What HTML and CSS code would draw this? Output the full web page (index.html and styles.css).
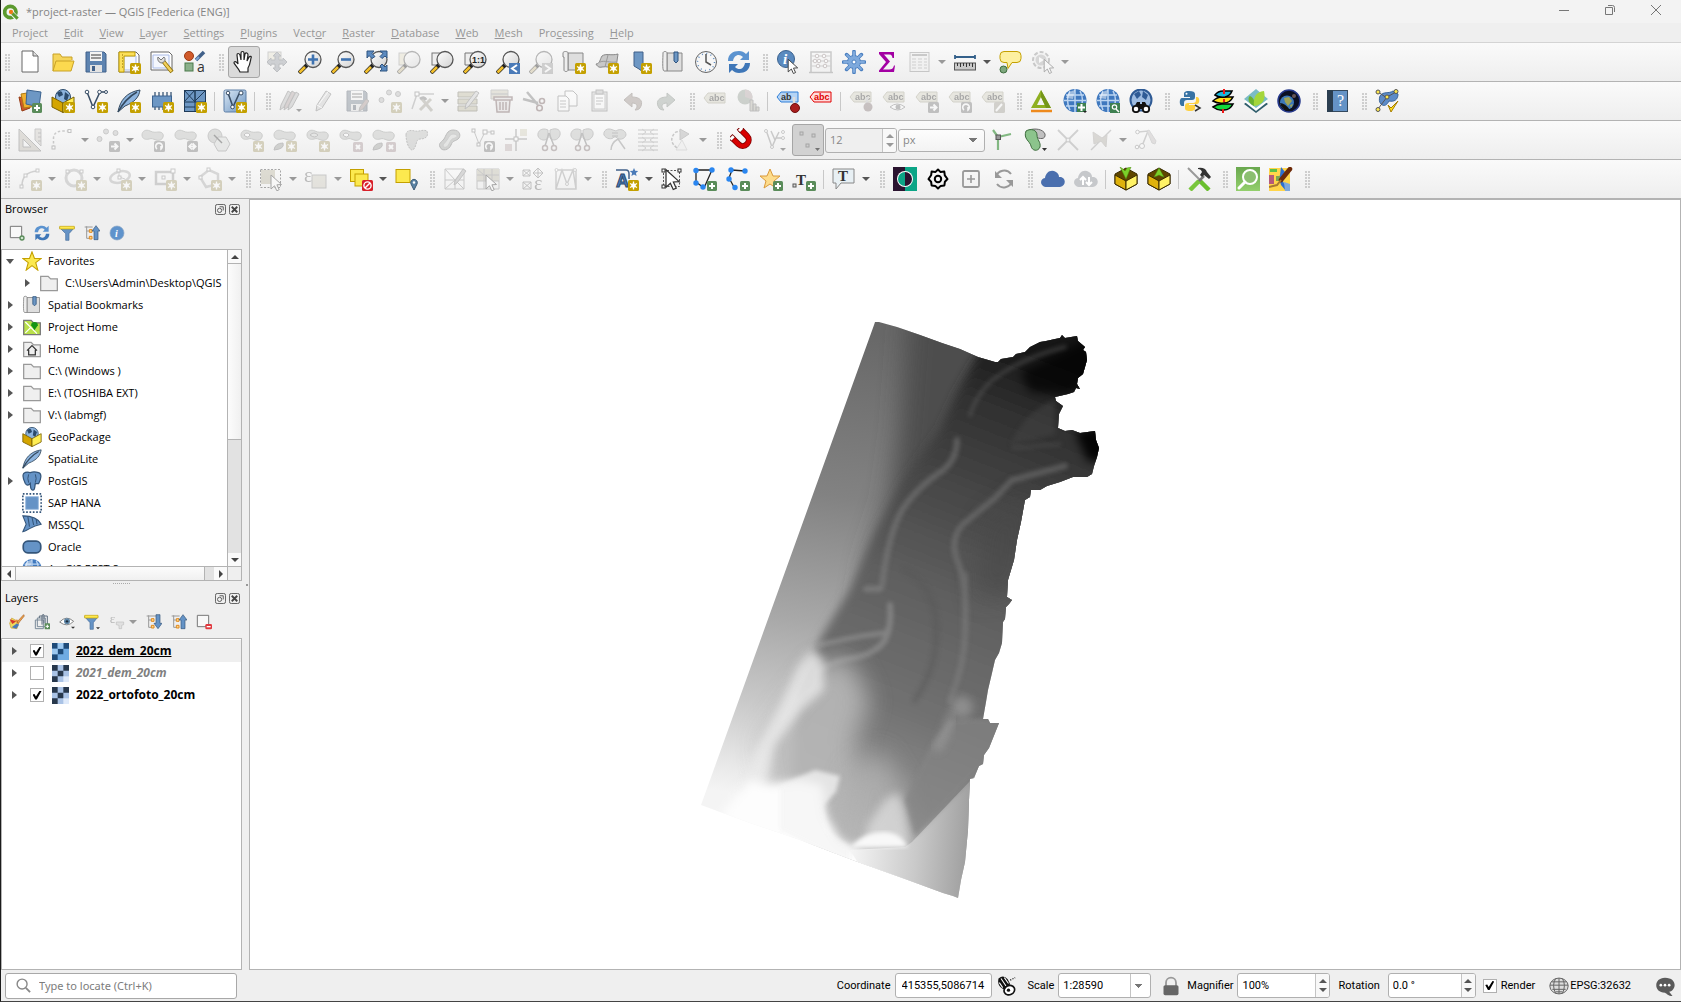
FILE: index.html
```html
<!DOCTYPE html>
<html lang="en">
<head>
<meta charset="utf-8">
<title>*project-raster — QGIS [Federica (ENG)]</title>
<link rel="stylesheet" href="styles.css">
</head>
<body>
<svg class="paints" aria-hidden="true">
<defs>
<linearGradient id="g-blue" x1="0" y1="0" x2="1" y2="1"><stop offset="0" stop-color="#dbe8f5"/><stop offset="1" stop-color="#6a93c0"/></linearGradient>
<linearGradient id="g-glass" x1="0" y1="0" x2="1" y2="1"><stop offset="0" stop-color="#fff"/><stop offset="1" stop-color="#d2d2d2"/></linearGradient>
<linearGradient id="g-green" x1="0" y1="0" x2="0" y2="1"><stop offset="0" stop-color="#6aa84f"/><stop offset="1" stop-color="#93cf6c"/></linearGradient>
</defs>
</svg>
<svg class="sprite" aria-hidden="true">
<defs>
<g id="b-new"><rect x="13" y="13" width="11" height="11" rx="1.5" fill="#c4a000"/><path d="M18.500 14.500v8M15 16.500l7 4M22 16.500l-7 4" stroke="#fff" stroke-width="1.300"/><circle cx="18.500" cy="18.500" r="2.200" fill="#fff"/></g>
<g id="b-add"><rect x="14" y="14" width="10" height="10" rx="1.500" fill="#5a8c5a"/><path d="M19 16v6M16 19h6" stroke="#fff" stroke-width="2"/></g>
<g id="b-del"><rect x="14" y="14" width="10" height="10" rx="1.500" fill="#c98a94"/><path d="M17 17l4 4M21 17l-4 4" stroke="#fff" stroke-width="2"/></g>
<g id="b-go"><rect x="13" y="13" width="11" height="11" rx="1.500" fill="#777"/><path d="M15 18.500h6M18.500 15.500l3 3-3 3" stroke="#fff" stroke-width="2" fill="none"/></g>
<g id="b-rot"><rect x="13" y="13" width="11" height="11" rx="1.500" fill="#777"/><path d="M16 21a3.300 3.300 0 1 1 4 0v-3" stroke="#fff" stroke-width="1.600" fill="none"/></g>
<g id="g-arrow"><path d="M8 7v14l3.500-3.200 2.300 5 2.400-1.100-2.300-4.900 4.600-.300z" fill="#fff" stroke="#333" stroke-width="1"/></g>
<g id="lens"><path d="M1 23l8-8" stroke="#222" stroke-width="4"/><path d="M1.500 22.500l5.500-5.500" stroke="#f2bf2c" stroke-width="2.600"/><circle cx="15" cy="9.500" r="8" fill="url(#g-glass)" stroke="#555" stroke-width="1.300"/></g>
<g id="tag"><path d="M1 8l4-5h17v10H5z" fill="#d8d29a" stroke="#a8a15e"/><text x="6" y="11" class="t-abc">abc</text></g>
<g id="blob"><path d="M1 7c0-4 4-6 8-4s6 1 9 1 5 2 4 5-4 4-7 3-4-2-7-1-7 0-7-4z" fill="#b9bdb6" stroke="#8a9086"/></g>
<g id="nodes" fill="#fff" stroke="#777"><rect x="1" y="18" width="3" height="3"/><rect x="17" y="1.500" width="3" height="3"/></g>
</defs>

<symbol id="logo" viewBox="0 0 24 24"><circle cx="11" cy="12" r="8.500" fill="none" stroke="#5c9a2e" stroke-width="5.500"/><path d="M12 12l10 11" stroke="#f3f3f3" stroke-width="7"/><path d="M14 14l8 8" stroke="#5c9a2e" stroke-width="4.500"/><circle cx="12" cy="12" r="3.200" fill="#ee7913"/></symbol>
<symbol id="new" viewBox="0 0 24 24"><path d="M4 1h11l5 5v16H4z" fill="#fff" stroke="#666"/><path d="M15 1v5h5" fill="#ddd" stroke="#666"/></symbol>
<symbol id="open" viewBox="0 0 24 24"><path d="M2 21V4h7l2 3h10v3" fill="#f5d55b" stroke="#c9a227"/><path d="M2 21l3-10h18l-3 10z" fill="#fcd94f" stroke="#c9a227"/></symbol>
<symbol id="save" viewBox="0 0 24 24"><path d="M2 2h18l2 2v18H2z" fill="#5d83b0" stroke="#41618a"/><rect x="6" y="2" width="12" height="9" fill="#f4f4f4"/><path d="M7 5h10M7 8h10" stroke="#777" stroke-width="1.500"/><rect x="6" y="15" width="12" height="7" fill="#e2e2e2"/><rect x="8" y="16" width="3" height="5" fill="#41618a"/></symbol>
<symbol id="layout" viewBox="0 0 24 24"><path d="M2 2h17l3 3v17H2z" fill="#fff" stroke="#666"/><path d="M7 6h12v14H7z" fill="#f4f7fd" stroke="#a9bbe8"/><path d="M2 2h16v4H7v16H2z" fill="#fbdf5b" stroke="#c4a000"/><path d="M5 5h1M5 8h1M5 11h1M5 14h1M5 17h1" stroke="#8a6d00"/><use href="#b-new"/></symbol>
<symbol id="layouts" viewBox="0 0 24 24"><path d="M1 2h18l3 3v15H1z" fill="#fff" stroke="#666"/><path d="M3 5h16v13H3z" fill="#f4f7fd" stroke="#a9bbe8"/><path d="M13 11l9 11" stroke="#8a6d00" stroke-width="4"/><path d="M13 11l8.500 10.500" stroke="#f2cf5b" stroke-width="2.500"/><path d="M8 7l3 3 3-3c2 2 1 5-2 6-3 0-5-3-4-6z" fill="#ddd" stroke="#777"/></symbol>
<symbol id="style" viewBox="0 0 24 24"><circle cx="6" cy="6" r="4.500" fill="#d05a2a" stroke="#9c3a14"/><path d="M13 10l8-8" stroke="#41618a" stroke-width="3.500"/><path d="M13 10l3-3" stroke="#7ba3d3" stroke-width="2"/><rect x="2" y="13" width="8" height="8" fill="#8bb08b" stroke="#4a7a4a"/><text x="14" y="22" class="t-a">a</text></symbol>
<symbol id="hand" viewBox="0 0 24 24"><path d="M8 22c-1-3-5-7-6-9 0-2 2-2 4 1L5 5c0-2 2-2 3 0l1 5V3c0-2 3-2 3 0v7l1-6c1-2 3-1 3 1l-1 6 2-4c1-1 3-1 2 1-1 5-1 7-3 10v4z" fill="#fff" stroke="#222" stroke-width="1.200"/></symbol>
<symbol id="pan" viewBox="0 0 24 24"><rect x="3" y="2" width="13" height="12" fill="#f0e2a0" stroke="#999"/><path d="M12 2l4 4h-2v4h4V8l4 4-4 4v-2h-4v4h2l-4 4-4-4h2v-4H6v2l-4-4 4-4v2h4V6H8z" fill="#8a9db5" stroke="#66788e"/></symbol>
<symbol id="zin" viewBox="0 0 24 24"><use href="#lens"/><path d="M15 4.500v10M10 9.500h10" stroke="#3f73b0" stroke-width="2.600"/></symbol>
<symbol id="zout" viewBox="0 0 24 24"><use href="#lens"/><path d="M10 9.500h10" stroke="#3f73b0" stroke-width="2.600"/></symbol>
<symbol id="zfull" viewBox="0 0 24 24"><use href="#lens"/><path d="M3 1h7L8 3.500l3 3-3 2-3-3L3 8zM23 1v7l-2-2-3 2.500-2-2 3-3L16 1zM23 21h-7l2-2-2-3 2-2 3 3 2-2z" fill="#5d8bc0" stroke="#2f5480"/></symbol>
<symbol id="zsel" viewBox="0 0 24 24"><rect x="2" y="3" width="12" height="12" fill="#f3e08a" stroke="#999"/><use href="#lens"/></symbol>
<symbol id="zlay" viewBox="0 0 24 24"><rect x="2" y="3" width="12" height="12" fill="#eee" stroke="#777"/><use href="#lens"/></symbol>
<symbol id="znat" viewBox="0 0 24 24"><path d="M2 3h8v12H2z" fill="#eee" stroke="#777"/><use href="#lens"/><text x="9" y="13" class="t-11">1:1</text></symbol>
<symbol id="zlast" viewBox="0 0 24 24"><use href="#lens"/><rect x="13" y="13" width="11" height="11" fill="#4a7ab8"/><path d="M21 15l-5 3.500 5 3.500" stroke="#fff" stroke-width="2" fill="none"/></symbol>
<symbol id="znext" viewBox="0 0 24 24"><use href="#lens"/><rect x="13" y="13" width="11" height="11" fill="#999"/><path d="M16 15l5 3.500-5 3.500" stroke="#fff" stroke-width="2" fill="none"/></symbol>
<symbol id="map" viewBox="0 0 24 24"><path d="M6 3h15v17H6z" fill="#dedede" stroke="#888"/><path d="M1 3c0-2 5-2 5 0v17c0 2-4 2-4 0V7H1z" fill="#eee" stroke="#888"/><use href="#b-new"/></symbol>
<symbol id="map3d" viewBox="0 0 24 24"><path d="M7 6c4-3 9 0 16-2l-2 14c-6 0-9-2-14-1-3 1-5-1-6-3 4 0 4-5 6-8z" fill="#c8c8c8" stroke="#888"/><path d="M5 12c5-2 10 1 16 0M13 5l-3 12" stroke="#999" fill="none"/><use href="#b-new"/></symbol>
<symbol id="bmnew" viewBox="0 0 24 24"><path d="M6 2h9v20l-4-3-5-3z" fill="#6d97c4" stroke="#41618a"/><use href="#b-new"/></symbol>
<symbol id="bm" viewBox="0 0 24 24"><path d="M6 3h15v18H6z" fill="#dedede" stroke="#888"/><path d="M2 3c0-2 4-2 4 0v18H3c-2 0-1-14-1-18z" fill="#eee" stroke="#888"/><path d="M13 2h4v9l-2 2-2-2z" fill="#6d97c4" stroke="#2f5480"/></symbol>
<symbol id="clock" viewBox="0 0 24 24"><circle cx="12" cy="12" r="10.500" fill="#f6f6f6" stroke="#666"/><circle cx="12" cy="12" r="8.500" fill="none" stroke="#5d8bc0" stroke-width="1.500" stroke-dasharray="1 3.450"/><path d="M12 4v8l5 3" stroke="#555" stroke-width="1.500" fill="none"/></symbol>
<symbol id="refresh" viewBox="0 0 24 24"><path d="M1 11C1 4 6 1 12 1c3 0 5 1 7 3l3-3v9h-9l3-3c-4-4-9-2-10 4z" fill="#5b93d0"/><path d="M23 13c0 7-5 10-11 10-3 0-5-1-7-3l-3 3v-9h9l-3 3c4 4 9 2 10-4z" fill="#3f77b8"/></symbol>
<symbol id="info" viewBox="0 0 24 24"><circle cx="10" cy="9" r="8.500" fill="#5a8abf" stroke="#3c638f"/><text x="7" y="14" class="t-i">i</text><g transform="translate(5 3) scale(.9)"><use href="#g-arrow"/></g></symbol>
<symbol id="abacus" viewBox="0 0 24 24"><path d="M2 22V2h20v20M0 22.500h24" fill="none" stroke="#888" stroke-width="1.500"/><path d="M2 6h20M2 11h20M2 16h20" stroke="#999"/><g fill="#fff" stroke="#a77"><circle cx="8" cy="6" r="1.800"/><circle cx="15" cy="6" r="1.800"/><circle cx="6" cy="11" r="1.800"/><circle cx="10" cy="11" r="1.800"/><circle cx="17" cy="11" r="1.800"/><circle cx="9" cy="16" r="1.800"/><circle cx="16" cy="16" r="1.800"/></g></symbol>
<symbol id="gear" viewBox="0 0 24 24"><path d="M12 1.500v21M1.500 12h21M4.600 4.600l14.800 14.800M19.400 4.600L4.600 19.400" stroke="#4a7fc0" stroke-width="3.600" stroke-linecap="round"/><circle cx="12" cy="12" r="6.500" fill="#7ea9dc" stroke="#4a7fc0"/><path d="M12 2v20M2 12h20M5 5l14 14M19 5L5 19" stroke="#7ea9dc" stroke-width="2" stroke-linecap="round"/><circle cx="12" cy="12" r="2" fill="#fff" stroke="#4a7fc0"/></symbol>
<symbol id="sigma" viewBox="0 0 24 24"><path d="M4 2h15v6h-1.500c-.500-3-1.500-3.500-4-3.500H9l6 7-7 8h6c3 0 4-1 5-4h1l-1 6.500H4v-1.500l7-8.500-7-8z" fill="#a300a3"/></symbol>
<symbol id="table" viewBox="0 0 24 24"><rect x="2" y="2.500" width="19" height="19" fill="#eee" stroke="#888"/><path d="M4 5h15" stroke="#888" stroke-width="2"/><path d="M4 9h4M4 12h4M4 15h4M4 18h4M10 9h4M10 12h4M10 15h4M10 18h4M16 9h3M16 12h3M16 15h3M16 18h3" stroke="#999"/></symbol>
<symbol id="ruler" viewBox="0 0 24 24"><path d="M2 7h20M2 5v4M22 5v4" stroke="#33608a" stroke-width="1.800"/><rect x="1.500" y="13" width="21" height="7" fill="#c9c9c9" stroke="#555"/><path d="M4.500 13v3M7.500 13v4M10.500 13v3M13.500 13v4M16.500 13v3M19.500 13v4" stroke="#333"/></symbol>
<symbol id="tip" viewBox="0 0 24 24"><path d="M6 1.500h13q4 0 4 4v3q0 4-4 4h-5l-4 6-1-6H6q-4 0-4-4v-3q0-4 4-4z" fill="#fdf0a0" stroke="#c4a000"/><circle cx="5.500" cy="19.500" r="3.500" fill="#7ea77e" stroke="#3e6d3e"/></symbol>
<symbol id="action" viewBox="0 0 24 24"><circle cx="10" cy="10" r="8" fill="#eee" stroke="#888" stroke-width="2" stroke-dasharray="4 2"/><circle cx="10" cy="10" r="5.500" fill="#aaa"/><path d="M8 7l5 3-5 3z" fill="#fff"/><g transform="translate(6 3) scale(.9)"><use href="#g-arrow"/></g></symbol>

<symbol id="dsm" viewBox="0 0 24 24"><path d="M1 8l10 2 1 9-8 3z" fill="#d0582a" stroke="#963b14"/><path d="M3 5l12-2 3 14-12 2z" fill="#f0b030" stroke="#b07b10"/><path d="M9 1l14 2-2 15-13-3z" fill="#6d97c4" stroke="#3c638f"/><use href="#b-add"/></symbol>
<symbol id="gpkg" viewBox="0 0 24 24"><circle cx="12" cy="8" r="7.500" fill="#8db4de" stroke="#2b4a6b"/><path d="M6 4q3-3 5-1l1 3-4 2zM14 3l4 3-2 6-3-2z" fill="#2b4a6b"/><path d="M1 8l11 6v9.500L1 18z" fill="#d4a500" stroke="#7a6000"/><path d="M12 14l11-6v10l-11 5.500z" fill="#ffee55" stroke="#7a6000"/></symbol>
<symbol id="gpkgnew" viewBox="0 0 24 24"><use href="#gpkg"/><use href="#b-new"/></symbol>
<symbol id="shpnew" viewBox="0 0 24 24"><path d="M3 3l6 15 7-15h6" stroke="#394e66" stroke-width="1.500" fill="none"/><g fill="#fff" stroke="#394e66"><circle cx="3" cy="3" r="1.800"/><circle cx="9" cy="18" r="1.800"/><circle cx="15.500" cy="3" r="1.800"/><circle cx="22" cy="3" r="1.500"/></g><use href="#b-new"/></symbol>
<symbol id="feather" viewBox="0 0 24 24"><path d="M1 23C3 11 10 3 23 1c-1 7-5 12-15 16z" fill="#8db4de" stroke="#34495e"/><path d="M1 23C6 14 11 8 20 3" stroke="#34495e" fill="none" stroke-width="1.500"/></symbol>
<symbol id="splnew" viewBox="0 0 24 24"><use href="#feather"/><use href="#b-new"/></symbol>
<symbol id="mem" viewBox="0 0 24 24"><path d="M5 3v18M9 3v18M13 3v18M17 3v18M21 3v15" stroke="#2b4a6b" stroke-width="1.200"/><rect x="2.500" y="7" width="19" height="11" fill="#6d97c4" stroke="#3c638f"/><use href="#b-new"/></symbol>
<symbol id="mesh" viewBox="0 0 24 24"><rect x="1.500" y="1.500" width="21" height="21" fill="#6d97c4" stroke="#1f3a57"/><path d="M1 13h22M12 1v22M12 13V1L1 13M23 1L12 12M1 1l11 12M1 18h11M17 13v10" stroke="#1f3a57" fill="none"/><use href="#b-new"/></symbol>
<symbol id="virt" viewBox="0 0 24 24"><rect x="1" y="1" width="22" height="22" rx="1.500" fill="url(#g-blue)" stroke="#5d7ea6"/><path d="M5 4l5 14 6-13h4" stroke="#394e66" stroke-width="1.600" fill="none"/><g fill="#fff" stroke="#394e66"><circle cx="5" cy="4" r="1.800"/><circle cx="9.500" cy="18" r="1.800"/><circle cx="18" cy="4" r="2"/></g><use href="#b-new"/></symbol>

<symbol id="pencils" viewBox="0 0 24 24"><g stroke="#777"><path d="M1 21l1-5L9 2l3 2-7 14z" fill="#bbb"/><path d="M5 21l1-5L13 2l3 2-7 14z" fill="#c99"/><path d="M9 21l1-5 7-13 3 2-7 13z" fill="#bbb"/></g><path d="M17 20h6l-3 3z" fill="#333"/></symbol>
<symbol id="pencil" viewBox="0 0 24 24"><path d="M4 22l1-6L14 2l5 3-9 14z" fill="#ccc" stroke="#777"/><path d="M5 16l5 3M7 15l9-12" stroke="#fff"/></symbol>
<symbol id="saveed" viewBox="0 0 24 24"><use href="#save"/><path d="M14 22l1-4 6-8 3 2-6 8z" fill="#c98a80" stroke="#777"/></symbol>
<symbol id="addpt" viewBox="0 0 24 24"><g fill="#bbb" stroke="#888"><circle cx="3.500" cy="11" r="2.500"/><circle cx="11" cy="3.500" r="2.500"/><circle cx="20" cy="5" r="2.500"/></g><use href="#b-new"/></symbol>
<symbol id="vertex" viewBox="0 0 24 24"><path d="M1 20L6 5h17" stroke="#999" fill="none" stroke-width="1.500"/><rect x="4" y="3" width="4" height="4" fill="#fff" stroke="#777"/><path d="M9 21L20 10M11 10l10 12" stroke="#a89f78" stroke-width="3"/><path d="M9 10q4-3 6 1" stroke="#777" stroke-width="3" fill="none"/></symbol>
<symbol id="modattr" viewBox="0 0 24 24"><path d="M2 3h19v5H2zM2 10h19v5H2zM2 17h19v5H2z" fill="#c9bd62" stroke="#7c7540"/><path d="M9 20l1-5L20 2l3 2-10 13z" fill="#ccc" stroke="#777"/></symbol>
<symbol id="trash" viewBox="0 0 24 24"><path d="M2 1h17v4H2zM2 5h17v5H2z" fill="#d6c78a" stroke="#999"/><path d="M5 8h18v3H5zM7 11h14l-1 12H8z" fill="#e8dada" stroke="#a05050" stroke-width="1.500"/><path d="M11 13v8M14 13v8M17 13v8" stroke="#a05050" stroke-width="1.500"/></symbol>
<symbol id="cut" viewBox="0 0 24 24"><path d="M1 10l15 4M5 3l11 13" stroke="#777" stroke-width="2.500"/><circle cx="20" cy="12" r="2.500" fill="none" stroke="#a05050" stroke-width="1.600"/><circle cx="17.500" cy="19" r="2.800" fill="none" stroke="#a05050" stroke-width="1.600"/></symbol>
<symbol id="copy" viewBox="0 0 24 24"><path d="M10 2h8l4 4v11H10z" fill="#fff" stroke="#777"/><path d="M3 7h8l3 3v12H3z" fill="#fff" stroke="#777"/><path d="M5 12h6M5 15h6M5 18h6" stroke="#888"/></symbol>
<symbol id="paste" viewBox="0 0 24 24"><rect x="4" y="3" width="15" height="19" fill="#ddd" stroke="#777"/><rect x="6" y="5" width="11" height="15" fill="#fff" stroke="#999"/><rect x="8" y="1" width="7" height="4" fill="#bbb" stroke="#777"/><path d="M8 9h7M8 12h7M8 15h5" stroke="#888"/></symbol>
<symbol id="undo" viewBox="0 0 24 24"><path d="M3 11l8-7v4c8 0 11 4 9 9-1 3-3 4-6 4 3-3 3-7-3-7v4z" fill="#b08a70" stroke="#8e6d58"/></symbol>
<symbol id="redo" viewBox="0 0 24 24"><path d="M21 11l-8-7v4c-8 0-11 4-9 9 1 3 3 4 6 4-3-3-3-7 3-7v4z" fill="#8aa890" stroke="#6c8870"/></symbol>
<symbol id="label" viewBox="0 0 24 24"><use href="#tag" y="1"/></symbol>
<symbol id="diagram" viewBox="0 0 24 24"><circle cx="9" cy="8" r="7.500" fill="#7fa37f"/><path d="M9 8V.500a7.500 7.500 0 0 1 7 10z" fill="#c99"/><path d="M14 11h3v11h-3zM17 15h3v7h-3zM20 18h3v4h-3z" fill="#bbb48a" stroke="#777"/></symbol>
<symbol id="labpin" viewBox="0 0 24 24"><path d="M1 8l4-5h17v10H5z" fill="#b5d4f5" stroke="#2f7fd8"/><text x="5" y="11" class="t-abc">ab</text><path d="M18 8v9" stroke="#ddd" stroke-width="2.500"/><circle cx="19" cy="19" r="4.500" fill="#a91d1d" stroke="#6e0f0f"/></symbol>
<symbol id="labred" viewBox="0 0 24 24"><path d="M1 8l4-5h17v10H5z" fill="#fdd" stroke="#e00000"/><text x="5" y="11" class="t-abc t-red">abc</text></symbol>
<symbol id="labp" viewBox="0 0 24 24"><use href="#tag"/><path d="M18 8v9" stroke="#bbb" stroke-width="2.500"/><circle cx="19" cy="18" r="4.500" fill="#a07070"/></symbol>
<symbol id="labeye" viewBox="0 0 24 24"><use href="#tag"/><path d="M8 18q7-6 15 0-7 6-15 0z" fill="#fff" stroke="#777"/><circle cx="16" cy="18" r="2.500" fill="#777"/></symbol>
<symbol id="labgo" viewBox="0 0 24 24"><use href="#tag"/><use href="#b-go"/></symbol>
<symbol id="labrot" viewBox="0 0 24 24"><use href="#tag"/><use href="#b-rot"/></symbol>
<symbol id="labed" viewBox="0 0 24 24"><use href="#tag"/><rect x="13" y="13" width="11" height="11" rx="1.500" fill="#a89f78"/><path d="M15 22l6-7" stroke="#fff" stroke-width="2"/></symbol>
<symbol id="tri" viewBox="0 0 24 24"><path fill-rule="evenodd" d="M11 1l10 18H1zM11 8l-4 8h8z" fill="#8fb021"/><path d="M11 1l10 18h-5L11 8z" fill="#75961a"/><path d="M1 22h21" stroke="#ee8a1d" stroke-width="2.500"/></symbol>
<symbol id="globe" viewBox="0 0 24 24"><circle cx="12" cy="11.500" r="11.500" fill="#3f78be"/><path d="M1 11.500h22M3 6h18M3 17h18M12 0v23M7 2Q2 11 7 21M17 2q5 9 0 19" stroke="#bcd5f2" stroke-width="1.500" fill="none"/><path d="M3 9q2-7 9-8l-2 9z" fill="#fff" opacity=".5"/></symbol>
<symbol id="globeadd" viewBox="0 0 24 24"><use href="#globe"/><rect x="14" y="14" width="9" height="9" fill="#3e8050"/><path d="M18.500 15v7M15 18.500h7" stroke="#fff" stroke-width="2"/><path d="M20 22h4l-2 2z" fill="#222"/></symbol>
<symbol id="globefind" viewBox="0 0 24 24"><use href="#globe"/><rect x="14" y="14" width="10" height="10" fill="#3e8050"/><circle cx="18.500" cy="18" r="2.200" fill="none" stroke="#fff" stroke-width="1.200"/><path d="M20 20l3 3" stroke="#fff" stroke-width="1.500"/></symbol>
<symbol id="binoc" viewBox="0 0 24 24"><circle cx="12" cy="11" r="10.500" fill="#9dbbe0" stroke="#2f5b95" stroke-width="2"/><path d="M5 5l5-3 2 4-4 4zM14 2l5 4-2 5-4-3z" fill="#2f5b95"/><path d="M4 20l4-7h3v2h2v-2h3l4 7z" fill="#111"/><circle cx="7" cy="20" r="3.200" fill="#fff" stroke="#111" stroke-width="1.800"/><circle cx="17" cy="20" r="3.200" fill="#fff" stroke="#111" stroke-width="1.800"/></symbol>
<symbol id="python" viewBox="0 0 24 24"><path d="M11 2c-5 0-5 2-5 3v3h6v1H4c-3 0-3 8 0 8h2v-3c0-2 1-3 3-3h5c2 0 3-1 3-3V5c0-2-2-3-6-3z" fill="#3873a4"/><path d="M12 22c5 0 5-2 5-3v-3h-6v-1h8c3 0 3-7 0-7h-1v3c0 2-1 3-3 3h-5c-2 0-3 1-3 3v2c0 2 1 3 5 3z" fill="#fed140"/><circle cx="8.500" cy="4.800" r="1" fill="#fff"/><path d="M17 16l5 3-5 3" stroke="#333" stroke-width="1.500" fill="none"/></symbol>
<symbol id="layers3" viewBox="0 0 24 24"><g stroke="#000" stroke-width="1.600"><path d="M2 18q4-3 9-3h11q-3 6-9 6-6 1-11-3z" fill="#14d83c"/><path d="M2 12q4-4 9-4h11q-3 6-9 6-6 1-11-2z" fill="#ffe01b"/><path d="M4 6q3-4 8-4h9q-2 5-7 6-6 1-10-2z" fill="#19b7dd"/></g><path d="M13 0v5M13 10v3M12 20v4" stroke="#f01818" stroke-width="2"/></symbol>
<symbol id="leaf" viewBox="0 0 24 24"><path d="M12 6l12 9-12 9L0 15z" fill="#2f5d6b"/><path d="M12 3l12 9.500L12 22 0 12.500z" fill="#fff"/><path d="M12 0l12 10-12 9L0 10z" fill="#7bbcc6"/><path d="M10 17C3 14 4 8 6 7c4 2 5 5 4 10z" fill="#6ab12f"/><path d="M10 17C9 8 12 3 20 2c2 8-1 14-10 15z" fill="#a4d63a"/></symbol>
<symbol id="earth" viewBox="0 0 24 24"><circle cx="12" cy="12" r="11" fill="#0b1022" stroke="#26398c" stroke-width="1.500"/><circle cx="10" cy="13.500" r="7" fill="#3d78b8"/><path d="M7 9l5-1 3 4-4 5-3-4zM13 16l3-1-2 4z" fill="#9fa456"/><path d="M3 14q5 0 10 7-8 1-10-7z" fill="#111"/><circle cx="17" cy="7" r="2" fill="#655"/></symbol>
<symbol id="help" viewBox="0 0 24 24"><rect x="1.500" y="1.500" width="20" height="21" fill="#6593c6" stroke="#34495e"/><path d="M1 1h6v22H1z" fill="#2b3e50"/><text x="11" y="17" class="t-q">?</text></symbol>
<symbol id="topol" viewBox="0 0 24 24"><path d="M5 7c3-5 9-2 13-5l5 3c0 6-4 8-9 7-2 4-5 6-8 3-2-2-2-5-1-8z" fill="#5d8bc8" stroke="#3a659a"/><path d="M3 3l9 6M12 8L3 20M12 8l9-5" stroke="#555"/><g fill="#ffe94d" stroke="#555"><circle cx="3" cy="3" r="2"/><circle cx="21" cy="2.500" r="2"/><circle cx="12" cy="8" r="2"/><circle cx="3" cy="20.500" r="2"/></g><path d="M13 16l3 3 7-7-7 11z" fill="#ffe01b" stroke="#a57c00"/></symbol>

<symbol id="setsq" viewBox="0 0 24 24"><path fill-rule="evenodd" d="M1 1l22 22H1zM5 11v8h8z" fill="#c9b898" stroke="#777"/><path d="M17 1h6v17l-6-6z" fill="#d2c8b4" stroke="#888"/><path d="M20 5h3M20 9h3M20 13h3" stroke="#777"/></symbol>
<symbol id="curve" viewBox="0 0 24 24"><path d="M2.500 20V10Q3 3 12 3h7" stroke="#888" fill="none" stroke-dasharray="2.500 2" stroke-width="1.500"/><use href="#nodes"/></symbol>
<symbol id="mvfeat" viewBox="0 0 24 24"><g fill="#bbb" stroke="#888"><circle cx="3.500" cy="11" r="2.500"/><circle cx="10" cy="3.500" r="2.500"/><circle cx="19.500" cy="5" r="2.500"/></g><use href="#b-go"/></symbol>
<symbol id="blobrot" viewBox="0 0 24 24"><use href="#blob"/><use href="#b-rot"/></symbol>
<symbol id="blobscale" viewBox="0 0 24 24"><use href="#blob"/><use href="#b-go"/><path d="M18 15.500l-3 3 3 3" stroke="#fff" stroke-width="1.500" fill="none"/></symbol>
<symbol id="simpl" viewBox="0 0 24 24"><circle cx="8" cy="8" r="7" fill="#b3b9b0" stroke="#888"/><path d="M11 9h8l4 7-4 7h-8l-4-7z" fill="#d5dad3" stroke="#888"/><path d="M7 7l8 8" stroke="#333" stroke-width="1.500"/></symbol>
<symbol id="ring" viewBox="0 0 24 24"><use href="#blob"/><path d="M4 7q3-4 6 0-2 4-6 0z" fill="#fff" stroke="#777"/><use href="#b-new"/></symbol>
<symbol id="part" viewBox="0 0 24 24"><use href="#blob"/><path d="M1 22q1-7 9-7 2 6-9 7z" fill="#9a9f95" stroke="#777"/><use href="#b-new"/></symbol>
<symbol id="fillring" viewBox="0 0 24 24"><use href="#blob"/><path d="M4 7q4-4 8 0-3 4-8 0z" fill="#c9d0c5" stroke="#777"/><use href="#b-new"/></symbol>
<symbol id="delring" viewBox="0 0 24 24"><use href="#blob"/><path d="M4 7q3-4 6 0-2 4-6 0z" fill="#fff" stroke="#777"/><use href="#b-del"/></symbol>
<symbol id="delpart" viewBox="0 0 24 24"><use href="#blob"/><path d="M1 22q1-7 9-7 2 6-9 7z" fill="#9a9f95" stroke="#777"/><use href="#b-del"/></symbol>
<symbol id="reshape" viewBox="0 0 24 24"><path d="M1 7c0-5 5-5 9-4s8-2 12 0c2 6-2 8-7 8-5 0-3 10-8 11-4-1-6-10-6-15z" fill="#b9bdb6" stroke="#777" stroke-dasharray="2 1"/></symbol>
<symbol id="offset" viewBox="0 0 24 24"><path d="M2 19c-2-4 2-5 4-8s3-9 9-9c8 0 8 7 5 9-4 3-5 1-7 6s-9 7-11 2z" fill="#a0a79b" stroke="#666"/><path d="M5 18c0-2 2-3 4-6s3-6 7-6c4 1 4 3 1 4-4 1-4 2-6 6s-5 4-6 2z" fill="#cdd3c9" stroke="#999"/></symbol>
<symbol id="split" viewBox="0 0 24 24"><path d="M11 2C5-1 0 3 1 8c2 5 8 5 10 2zM13 2c7-3 11 0 10 5-2 6-8 6-10 3z" fill="#b9bdb6" stroke="#888"/><path d="M12 5l-4 13M12 5l5 13" stroke="#777" fill="none" stroke-width="1.500"/><circle cx="8" cy="20" r="2.500" fill="none" stroke="#a07070" stroke-width="1.500"/><circle cx="17" cy="20" r="2.500" fill="none" stroke="#a07070" stroke-width="1.500"/></symbol>
<symbol id="merge" viewBox="0 0 24 24"><path d="M10 2C4-1 0 3 1 7c2 4 8 5 10 2h2c3 4 9 2 10-2 0-5-6-7-10-4z" fill="#b9bdb6" stroke="#888"/><path d="M9 5h6M9 8h6" stroke="#777"/><path d="M8 22q0-7 7-11l7 10" stroke="#888" fill="none" stroke-width="1.500"/></symbol>
<symbol id="reverse" viewBox="0 0 24 24"><path d="M3 3l5 13 6-12h7" stroke="#888" fill="none"/><g fill="#fff" stroke="#777"><rect x="1" y="1" width="3" height="3"/><rect x="12" y="2" width="4" height="4"/><rect x="20" y="3" width="3" height="3"/><rect x="6" y="15" width="3" height="3"/></g><use href="#b-rot"/></symbol>
<symbol id="trim" viewBox="0 0 24 24"><path d="M12 1v22M1 11h22" stroke="#888" stroke-width="1.500"/><rect x="10" y="9" width="4" height="4" fill="#fff" stroke="#777"/><rect x="1" y="16" width="7" height="7" fill="#d9a7a7"/><rect x="16" y="1" width="7" height="7" fill="#d8cf8a"/></symbol>
<symbol id="align" viewBox="0 0 24 24"><path d="M2 2h20M2 6h20M2 10h20M2 14h20M2 18h20M2 22h20" stroke="#888" stroke-width="1.200"/><path d="M6 1l4 3-4 3M18 1l-4 3 4 3M6 9l4 3-4 3M18 9l-4 3 4 3M6 17l4 3-4 3M18 17l-4 3 4 3" stroke="#999" fill="none"/></symbol>
<symbol id="rotpt" viewBox="0 0 24 24"><path d="M8 20Q-2 12 7 4l5-1" stroke="#888" fill="none" stroke-width="1.500" stroke-dasharray="3 1.500"/><path d="M11 1l9 5-9 6z" fill="#aaa" stroke="#888"/><path d="M7 22h11l-5-10z" fill="#eee" stroke="#bbb"/></symbol>
<symbol id="magnet" viewBox="0 0 24 24"><g fill="none" transform="rotate(-45 12 12)"><path d="M6.500 3v9.500a6 6 0 0 0 12 0V3" stroke="#7c0000" stroke-width="6"/><path d="M6.500 3v9.500a6 6 0 0 0 12 0V3" stroke="#d80000" stroke-width="4.500"/><path d="M6.500 1v4.500M18.500 1v4.500" stroke="#7c0000" stroke-width="6"/><path d="M6.500 2v3M18.500 2v3" stroke="#fff" stroke-width="4.500"/></g></symbol>
<symbol id="snapcfg" viewBox="0 0 24 24"><path d="M3 2l6 17 4-9h7M8 3l4 9 4-8" stroke="#888" fill="none" stroke-width="1.500"/><g fill="#fff" stroke="#888"><circle cx="3" cy="3" r="1.500"/><circle cx="9" cy="19" r="1.500"/><circle cx="20" cy="4" r="1.500"/><circle cx="20" cy="10" r="1.500"/></g><path d="M17 20h6l-3 3z" fill="#333"/></symbol>
<symbol id="snapdots" viewBox="0 0 24 24"><g fill="#ccc" stroke="#888"><rect x="4" y="4" width="3" height="3"/><rect x="16" y="6" width="3" height="3"/><rect x="10" y="16" width="3" height="3"/></g><path d="M19 20h5l-2.500 3z" fill="#333"/></symbol>
<symbol id="topo" viewBox="0 0 24 24"><path d="M3 2l5 7 13-3M8 9v13" stroke="#82b882" stroke-width="2.200" fill="none"/><rect x="6" y="7" width="4.500" height="4.500" fill="#999" stroke="#555"/></symbol>
<symbol id="overlap" viewBox="0 0 24 24"><path d="M6 2c6-2 14-1 16 4 1 6-6 5-9 3z" fill="#c0c0c0" stroke="#666"/><path d="M3 3c5-3 11-1 11 4s4 7 3 12c-2 5-8 4-9-1S0 11 3 3z" fill="#8cc48c" stroke="#3e6d3e"/><path d="M19 20h5l-2.500 3z" fill="#333"/></symbol>
<symbol id="cross" viewBox="0 0 24 24"><path d="M2 2l20 20M22 2L2 22" stroke="#999" stroke-width="1.800"/><circle cx="12" cy="12" r="2" fill="#eee" stroke="#888"/></symbol>
<symbol id="selfx" viewBox="0 0 24 24"><path d="M2 22L22 2" stroke="#999" stroke-width="1.500"/><path d="M4 4l9 6 5-3-1 12-5-6-7 3z" stroke="#a8a090" fill="#b8ac90"/></symbol>
<symbol id="trace" viewBox="0 0 24 24"><path d="M4 4l10-1-6 15-5 1" stroke="#999" fill="none" stroke-width="1.500"/><g fill="#fff" stroke="#888"><circle cx="3.500" cy="4" r="1.800"/><circle cx="3" cy="19" r="1.800"/><circle cx="8" cy="18" r="2.500"/></g><path d="M13 3l2-1 7 11-1 3-3-1z" fill="#cbb" stroke="#aaa"/></symbol>

<symbol id="arc" viewBox="0 0 24 24"><path d="M4 19Q4 5 19 4" stroke="#999" fill="none" stroke-width="1.500"/><g fill="#fff" stroke="#888"><rect x="2" y="18" width="3" height="3"/><rect x="6" y="7" width="3" height="3"/><rect x="18" y="2" width="3" height="3"/></g><use href="#b-new"/></symbol>
<symbol id="circ" viewBox="0 0 24 24"><circle cx="11" cy="11" r="8" stroke="#aaa" fill="none" stroke-width="3"/><g fill="#fff" stroke="#888"><rect x="3" y="3" width="3" height="3"/><rect x="17" y="3" width="3" height="3"/></g><use href="#b-new"/></symbol>
<symbol id="ell" viewBox="0 0 24 24"><ellipse cx="12" cy="10" rx="10" ry="5.500" stroke="#aaa" fill="none" stroke-width="2.500" transform="rotate(-15 12 10)"/><path d="M11 2v8l6 2" stroke="#999" fill="none"/><g fill="#fff" stroke="#888"><rect x="9" y="2" width="3" height="3"/><rect x="10" y="9" width="3" height="3"/></g><use href="#b-new"/></symbol>
<symbol id="rect" viewBox="0 0 24 24"><rect x="3" y="5" width="17" height="12" fill="none" stroke="#999" stroke-width="2.500"/><g fill="#fff" stroke="#888"><rect x="9" y="9" width="3" height="3"/><rect x="18" y="2" width="4" height="4"/></g><use href="#b-new"/></symbol>
<symbol id="poly" viewBox="0 0 24 24"><path d="M2 10l9-7 9 4v10l-12 3z" fill="none" stroke="#aaa" stroke-width="2.500"/><g fill="#fff" stroke="#888"><rect x="9" y="1" width="3" height="3"/><rect x="1" y="9" width="3" height="3"/></g><use href="#b-new"/></symbol>
<symbol id="selrect" viewBox="0 0 24 24"><rect x="1.500" y="2.500" width="20" height="18" fill="none" stroke="#333" stroke-dasharray="2 1.500"/><rect x="2" y="3" width="14" height="14" fill="#c4b46c"/><g transform="translate(4 1)"><use href="#g-arrow"/></g></symbol>
<symbol id="selexp" viewBox="0 0 24 24"><rect x="8" y="8" width="14" height="13" fill="#d4cba0" stroke="#888"/><text x="0" y="15" class="t-eps">ε</text></symbol>
<symbol id="desel" viewBox="0 0 24 24"><rect x="1.500" y="2.500" width="13" height="12" fill="#fce94f" stroke="#c4a000"/><rect x="6" y="7" width="13" height="12" fill="#fce94f" stroke="#c4a000"/><rect x="13" y="13" width="11" height="11" rx="1.500" fill="#d8202a"/><circle cx="18.500" cy="18.500" r="3.600" fill="none" stroke="#fff" stroke-width="1.400"/><path d="M16 21l5-5" stroke="#fff" stroke-width="1.400"/></symbol>
<symbol id="selloc" viewBox="0 0 24 24"><rect x="2" y="2.500" width="14" height="13" fill="#fce94f" stroke="#c4a000"/><path d="M20 23l-3-6a3.300 3.300 0 1 1 6 0z" fill="#5d85a6" stroke="#3c5a75"/><circle cx="20" cy="15.500" r="1.200" fill="#fff"/></symbol>
<symbol id="meshed" viewBox="0 0 24 24"><path d="M2 2h19v20H2zM2 2l10 11L21 2M2 22l10-9 9 9M2 13h19M12 13v9" stroke="#888" fill="none"/><path d="M11 18l1-4L20 2l3 2-9 12z" fill="#aaa" stroke="#777"/></symbol>
<symbol id="meshsel" viewBox="0 0 24 24"><path d="M1 2h22v20H1z" fill="#eee" stroke="#888"/><path d="M1 2h22v12H1z" fill="#c4ba80"/><path d="M1 8h22M1 14h22M8 2v20M16 2v20M1 2l7 6" stroke="#888"/><g transform="translate(2 1)"><use href="#g-arrow"/></g></symbol>
<symbol id="meshtr" viewBox="0 0 24 24"><path d="M2 3h7v6H2zM2 3l7 6M9 3L2 9M2 15h8v7H2zM2 15l8 7M10 15l-8 7M12 6l5-5 5 5-5 5zM12 6h10M17 1v10" stroke="#777" fill="none"/><text x="13" y="23" class="t-eps">ε</text></symbol>
<symbol id="meshfc" viewBox="0 0 24 24"><path d="M2 3h20M2 3v19h20V3M2 22L8 3l5 14 6-14 3 19" stroke="#999" fill="none" stroke-width="1.500"/><g fill="#fff" stroke="#999"><circle cx="2.500" cy="3" r="1.500"/><circle cx="13" cy="17" r="1.500"/><circle cx="21" cy="3" r="1.500"/></g></symbol>
<symbol id="annlayer" viewBox="0 0 24 24"><path d="M1 3h10q3 0 3 4v5" stroke="#41618a" stroke-width="1.500" fill="none"/><text x="1" y="20" class="t-A">A</text><path d="M19 1l1.200 2.800 3 .200-2.300 2 .700 3L19 7.500 16.400 9l.700-3-2.300-2 3-.200z" fill="#4a7ab8"/><use href="#b-new"/></symbol>
<symbol id="annsel" viewBox="0 0 24 24"><rect x="3.500" y="3.500" width="16" height="16" fill="none" stroke="#555" stroke-dasharray="2 1.500"/><g fill="#fff" stroke="#333"><rect x="2" y="2" width="3" height="3"/><rect x="18" y="2" width="3" height="3"/><rect x="2" y="18" width="3" height="3"/></g><g transform="translate(-4 -6) scale(1.250)"><use href="#g-arrow"/></g></symbol>
<symbol id="annpoly" viewBox="0 0 24 24"><path d="M3 3h16l-8 18-8-6z" fill="none" stroke="#222" stroke-width="1.300"/><g fill="#2a86f0"><circle cx="3" cy="3.500" r="2.700"/><circle cx="19" cy="3" r="2.700"/><circle cx="3" cy="16" r="2.700"/><circle cx="10" cy="20" r="2.700"/></g><use href="#b-add"/></symbol>
<symbol id="annline" viewBox="0 0 24 24"><path d="M19 4L6 3 3 11l5 9" fill="none" stroke="#222" stroke-width="1.300"/><g fill="#2a86f0"><circle cx="5" cy="3" r="2.700"/><circle cx="19" cy="4" r="2.700"/><circle cx="3" cy="12" r="2.700"/><circle cx="9" cy="20.500" r="2.700"/></g><use href="#b-add"/></symbol>
<symbol id="annmark" viewBox="0 0 24 24"><path d="M11 2l3 7h7l-6 5 2 7-6-4-6 4 2-7-6-5h7z" fill="#fddc8c" stroke="#d9993a"/><use href="#b-add"/></symbol>
<symbol id="anntext" viewBox="0 0 24 24"><rect x="1" y="17" width="3" height="3" fill="#ddd" stroke="#555"/><text x="4" y="18" class="t-T">T</text><use href="#b-add"/></symbol>
<symbol id="textann" viewBox="0 0 24 24"><path d="M1 2h21v14H9l-5 6v-6H1z" fill="#e8f0f4" stroke="#888"/><text x="6" y="14" class="t-T">T</text></symbol>
<symbol id="plug1" viewBox="0 0 24 24"><path d="M0 0h24v24H0z" fill="#2b1430"/><path d="M12 0h12v24H12z" fill="#0ba586"/><circle cx="12" cy="12" r="8" fill="#fff"/><path d="M12 5a7 7 0 0 0 0 14z" fill="#0ba586"/><path d="M12 5a7 7 0 0 1 0 14z" fill="#2b1430"/></symbol>
<symbol id="cog" viewBox="0 0 24 24"><path d="M12 2.500l2.600 2.600 3.700-.500.500 3.700L21.500 12l-2.600 2.700-.500 3.700-3.700.500L12 21.500l-2.700-2.600-3.700-.500-.500-3.700L2.500 12l2.600-3.700.500-3.700 3.700.500z" fill="none" stroke="#000" stroke-width="2" stroke-linejoin="round"/><circle cx="12" cy="12" r="3.200" fill="none" stroke="#000" stroke-width="2"/></symbol>
<symbol id="plusbox" viewBox="0 0 24 24"><rect x="4" y="4" width="16" height="16" rx="1.500" fill="none" stroke="#999" stroke-width="1.800"/><path d="M12 8v8M8 12h8" stroke="#999" stroke-width="1.600"/></symbol>
<symbol id="sync" viewBox="0 0 24 24"><path d="M4 10a8.500 8.500 0 0 1 15-3M20 14a8.500 8.500 0 0 1-15 3" fill="none" stroke="#999" stroke-width="2"/><path d="M3 4v7h7zM21 20v-7h-7z" fill="#999"/></symbol>
<symbol id="cloud" viewBox="0 0 24 24"><path d="M6 20c-7 0-8-8-2-9 1-6 6-9 11-6 2 1 3 3 3 5 7-1 8 9 1 10z" fill="#4a6fae"/></symbol>
<symbol id="cloudud" viewBox="0 0 24 24"><path d="M6 20c-7 0-8-8-2-9 1-6 6-9 11-6 2 1 3 3 3 5 7-1 8 9 1 10z" fill="#c6c8cb"/><path d="M9 18v-7M6 13l3-3 3 3M15 10v7M12 15l3 3 3-3" stroke="#fff" stroke-width="2" fill="none"/></symbol>
<symbol id="box" viewBox="0 0 24 24"><path d="M1 7l11-6 11 6v10l-11 6-11-6z" fill="#5f4600" stroke="#3a2b00"/><path d="M1 8l11 6v9L1 17z" fill="#dfb20c" stroke="#3a2b00"/><path d="M12 14l11-6v9l-11 6z" fill="#fff266" stroke="#3a2b00"/></symbol>
<symbol id="boxin" viewBox="0 0 24 24"><use href="#box"/><path d="M6 0l3 2 2 2 2-3 4-1-5 12z" fill="#7bd02a" stroke="#4a8a10" stroke-width=".5"/></symbol>
<symbol id="boxout" viewBox="0 0 24 24"><use href="#box"/><path d="M12 1l5 9-3-1-2-1-2 1-3 1z" fill="#7bd02a" stroke="#4a8a10" stroke-width=".5"/></symbol>
<symbol id="tools" viewBox="0 0 24 24"><path d="M1 1l12 12" stroke="#999" stroke-width="2"/><path d="M13 14l9 9" stroke="#6abf2e" stroke-width="4.500"/><path d="M17 9L10 16" stroke="#777" stroke-width="2.500"/><path d="M12 14L3 23" stroke="#79c63c" stroke-width="4.500"/><path d="M11 1q7-1 9 4l4 5-2 2-5-4-2 2-2-2 2-3q-1-3-4-3z" fill="#333"/></symbol>
<symbol id="gsearch" viewBox="0 0 24 24"><path d="M0 0h24v24H0z" fill="url(#g-green)"/><circle cx="14" cy="10" r="7" fill="#8bbf70" stroke="#fff" stroke-width="2"/><path d="M9 15l-6 6" stroke="#fff" stroke-width="3" stroke-linecap="round"/></symbol>
<symbol id="paint" viewBox="0 0 24 24"><path d="M0 1h21v23H0z" fill="#ffd54a"/><path d="M0 8h5v9H0z" fill="#b55a7a"/><path d="M12 0l4 5-3 5q0 6 6 10l-2 4-5-6q-3-8-1-10z" fill="#2b6fd1"/><path d="M15 15l6 2v7h-5z" fill="#7ea9dc"/><path d="M1 2h7v3H1z" fill="#5cc04a"/><path d="M7 9h4v5H7z" fill="#7aa650"/><path d="M21 2L12 13" stroke="#6d2a08" stroke-width="4.500" stroke-linecap="round"/><path d="M12 13l-4 5-8 2" stroke="#a87a30" stroke-width="2" fill="none"/></symbol>

<symbol id="folder" viewBox="0 0 24 24"><path d="M2 21V4h9l3 3h8v14z" fill="#efefef" stroke="#999" stroke-width="1.500"/></symbol>
<symbol id="fproj" viewBox="0 0 24 24"><path d="M2 21V4h9l3 3h8v14z" fill="#b9e04a" stroke="#777" stroke-width="1.500"/><path d="M4 6l14 14M10 13l-6 6" stroke="#fff" stroke-width="1.500"/><path d="M15 16l-4-6q0-4 4-4t4 4z" fill="#149414"/></symbol>
<symbol id="fhome" viewBox="0 0 24 24"><path d="M2 21V4h9l3 3h8v14z" fill="#efefef" stroke="#999" stroke-width="1.500"/><path d="M6 14l6-6 6 6M8 13v6h8v-6" stroke="#333" stroke-width="1.500" fill="none"/></symbol>
<symbol id="star" viewBox="0 0 24 24"><path d="M12 1l3 8h8l-6.500 5 2.500 9-7-5.500L5 23l2.500-9L1 9h8z" fill="#fce94f" stroke="#c4a000" stroke-width="1.300"/></symbol>
<symbol id="pg" viewBox="0 0 24 24"><path d="M2 3c4-3 6-1 8-1 4-2 7-1 10 0 4 1 3 8 0 13h-4c-1 4 0 8-3 8s-3-5-3-8c-2 2-4 3-6 0-2-4-4-9-2-12z" fill="#6593c6" stroke="#34557a" stroke-width="1.500"/><path d="M8 4q-2 5 0 10M16 4q2 5 0 10" stroke="#34557a" fill="none" stroke-width="1.200"/></symbol>
<symbol id="hana" viewBox="0 0 24 24"><rect x="1" y="1" width="22" height="22" fill="none" stroke="#34557a" stroke-width="2" stroke-dasharray="2 2"/><rect x="4.500" y="4.500" width="15" height="15" fill="#6593c6" stroke="#8fb3dc"/></symbol>
<symbol id="mssql" viewBox="0 0 24 24"><path d="M1 1l4 10-4 9c7-1 9-7 22-9C19 3 9 1 1 1z" fill="#6593c6" stroke="#34557a" stroke-width="1.300"/><path d="M7 2l2 12M12 3l2 9M17 5l1 6" stroke="#34557a" stroke-width="1.300"/></symbol>
<symbol id="oracle" viewBox="0 0 24 24"><rect x="1.500" y="5" width="21" height="14" rx="5.500" fill="#6593c6" stroke="#34557a" stroke-width="2"/></symbol>
<symbol id="addlay" viewBox="0 0 24 24"><path d="M2 2h17v17H2z" fill="#f8f8f8" stroke="#777" stroke-width="1.500"/><circle cx="19.500" cy="19.500" r="3" fill="#cfe6cf" stroke="#5a8c5a" stroke-width="2"/></symbol>
<symbol id="funnel" viewBox="0 0 24 24"><path d="M1 4h22l-8 9v10h-5V13z" fill="#6593c6" stroke="#4a6f9c"/><path d="M1 2h22v4H1z" fill="#fce94f" stroke="#c4a000"/></symbol>
<symbol id="collapse" viewBox="0 0 24 24"><path d="M4 2v18h4M4 9h4M1 3h12" stroke="#999" stroke-width="1.500" fill="none"/><path d="M8 7h4v4H8zM8 17h4v4H8z" fill="#fcd68c" stroke="#e08a1e" stroke-width="1.500"/><path d="M15 22V9h-3l6-8 6 8h-3v13z" fill="#6593c6" stroke="#34557a"/></symbol>
<symbol id="expand" viewBox="0 0 24 24"><path d="M4 2v18h4M4 9h4M1 3h16" stroke="#999" stroke-width="1.500" fill="none"/><path d="M8 7h4v4H8zM8 17h4v4H8z" fill="#fcd68c" stroke="#e08a1e" stroke-width="1.500"/><path d="M15 1v13h-3l6 8 6-8h-3V1z" fill="#6593c6" stroke="#34557a"/></symbol>
<symbol id="inforound" viewBox="0 0 24 24"><circle cx="12" cy="12" r="10.500" fill="#5f93cc" stroke="#8aa5c2"/><text x="9" y="18" class="t-i">i</text></symbol>
<symbol id="brush" viewBox="0 0 24 24"><path d="M1 14l3-8 11 6-3 10-9-1z" fill="#f0d85a" stroke="#c9a23a"/><path d="M1 8l10 3-6 4z" fill="#d8392b"/><path d="M4 20l8-6 3 2-4 6z" fill="#4a7ab8"/><path d="M9 10l3-2 3 4-2 3z" fill="#e8933c"/><path d="M12 12l2 2 9-11-1-2z" fill="#f0a045" stroke="#a8632a"/></symbol>
<symbol id="grp" viewBox="0 0 24 24"><path d="M2 9h12v13H2zM5 6h12v13H5z" stroke="#7a8a99" stroke-width="1.500" fill="none"/><path d="M8 6V3h12v13h-3M12 16V2q3-3 3 0v12" stroke="#5d6d7e" stroke-width="1.500" fill="none"/><rect x="16" y="14" width="8" height="9" rx="1" fill="#5a8c5a"/><path d="M20 16v5M17.500 18.500h5" stroke="#fff" stroke-width="1.500"/></symbol>
<symbol id="eye" viewBox="0 0 24 24"><path d="M1 12Q11 1 22 11q-10 10-21 1z" fill="#fff" stroke="#888" stroke-width="1.500"/><circle cx="12" cy="11" r="4.500" fill="#5d85a6"/><circle cx="12" cy="11" r="1.800" fill="#1c2c3c"/><path d="M18 19h6l-3 3z" fill="#333"/></symbol>
<symbol id="funnelm" viewBox="0 0 24 24"><path d="M1 4h20l-7 9v10H9V13z" fill="#6593c6" stroke="#4a6f9c"/><path d="M1 2h20v4H1z" fill="#fce94f" stroke="#c4a000"/><path d="M18 20h6l-3 3z" fill="#333"/></symbol>
<symbol id="epsf" viewBox="0 0 24 24"><text x="1" y="13" class="t-eps">ε</text><path d="M11 12h11v4l-3 1v5h-4v-5l-4-1z" fill="#ccc" stroke="#777"/></symbol>
<symbol id="remove" viewBox="0 0 24 24"><path d="M2 2h17v17H2z" fill="#f8f8f8" stroke="#777" stroke-width="1.500"/><rect x="14" y="15" width="10" height="8" rx="2" fill="#e0383e"/><path d="M16 19h6" stroke="#fff" stroke-width="2"/></symbol>
<symbol id="rasterblue" viewBox="0 0 24 24"><path d="M0 0h24v24H0z" fill="#6fabe3"/><path d="M0 0h8v8H0zM16 0h8v8h-8zM8 8h8v8H8zM0 16h8v8H0z" fill="#1e4a78"/><path d="M8 0h8v8H8zM0 8h8v8H0z" fill="#9cc8f0"/></symbol>
<symbol id="raster" viewBox="0 0 24 24"><path d="M0 0h24v24H0z" fill="#aac3e6"/><path d="M0 0h8v8H0zM16 0h8v8h-8zM8 8h8v8H8zM0 16h8v8H0z" fill="#28384c"/><path d="M16 16h8v8h-8z" fill="#dfeafa"/></symbol>
<symbol id="float" viewBox="0 0 12 12"><rect x=".5" y=".5" width="11" height="11" rx="2" fill="none" stroke="#555"/><circle cx="5" cy="7" r="2.300" fill="none" stroke="#555"/><path d="M5 3h4v4" fill="none" stroke="#555"/></symbol>
<symbol id="close" viewBox="0 0 12 12"><rect x=".5" y=".5" width="11" height="11" rx="2" fill="none" stroke="#555"/><path d="M3 3l6 6M9 3L3 9" stroke="#444" stroke-width="2"/></symbol>
<symbol id="mouse" viewBox="0 0 24 24"><path d="M3 3q6-5 11 1l3 6-8 6q-8-4-6-13z" fill="#111"/><path d="M6 3l6 9M10 2l5 7M4 8l4 6" stroke="#fff" stroke-width="1.300"/><ellipse cx="16" cy="17" rx="6.500" ry="5.500" fill="#fff" stroke="#111" stroke-width="2" transform="rotate(-25 16 17)"/><circle cx="15" cy="17" r="2" fill="#111"/><path d="M17 5l6-3" stroke="#222" stroke-width="1.500" stroke-dasharray="1.500 1.500"/></symbol>
<symbol id="lock" viewBox="0 0 24 24"><path d="M6 12V8a6 6 0 0 1 12 0v4" fill="none" stroke="#999" stroke-width="2.200"/><rect x="3" y="11" width="18" height="12" rx="2" fill="#666"/></symbol>
<symbol id="crs" viewBox="0 0 24 24"><ellipse cx="12" cy="12" rx="11" ry="9.500" fill="#ddd"/><path d="M1 12a11 9.500 0 0 1 22 0 11 9.500 0 0 1-22 0zM1 11h22M3 7h18M4 16h16M8 19h8M12 2.500v19M8 3q-5 8 0 18M16 3q5 8 0 18" fill="none" stroke="#666" stroke-width="1.200"/></symbol>
<symbol id="bubble" viewBox="0 0 24 24"><path d="M12 2c15 0 14 15 5 17l4 5c-5 0-7-3-9-4-14 0-14-18 0-18z" fill="#5a5a5a"/><circle cx="7" cy="11" r="1.600" fill="#fff"/><circle cx="12" cy="11" r="1.600" fill="#fff"/><circle cx="17" cy="11" r="1.600" fill="#fff"/></symbol>
<symbol id="search" viewBox="0 0 16 16"><circle cx="6.500" cy="6.500" r="5.300" fill="none" stroke="#888" stroke-width="1.500"/><path d="M10.500 10.500l4.500 4.500" stroke="#888" stroke-width="2"/></symbol>
</svg>

<div class="window">
<header class="titlebar">
<svg class="logo"><use href="#logo"/></svg>
<h1>*project-raster — QGIS [Federica (ENG)]</h1>
<div class="winbtns">
<button aria-label="Minimize"><svg viewBox="0 0 12 12"><path d="M1 6.500h10"/></svg></button>
<button aria-label="Restore"><svg viewBox="0 0 12 12"><path d="M1.500 3.500h7v7h-7zM4 1.500h4.500q2 0 2 2V8"/></svg></button>
<button aria-label="Close"><svg viewBox="0 0 12 12"><path d="M1 1l10 10M11 1L1 11"/></svg></button>
</div>
</header>
<nav class="menubar">
<a href="#project">Pro<u>j</u>ect</a><a href="#edit"><u>E</u>dit</a><a href="#view"><u>V</u>iew</a><a href="#layer"><u>L</u>ayer</a><a href="#settings"><u>S</u>ettings</a><a href="#plugins"><u>P</u>lugins</a><a href="#vector">Vect<u>o</u>r</a><a href="#raster-menu"><u>R</u>aster</a><a href="#database"><u>D</u>atabase</a><a href="#web"><u>W</u>eb</a><a href="#mesh-menu"><u>M</u>esh</a><a href="#processing">Pro<u>c</u>essing</a><a href="#help-menu"><u>H</u>elp</a>
</nav>

<div class="toolrow">
<div class="group">
<button aria-label="New project"><svg><use href="#new"/></svg></button>
<button aria-label="Open"><svg><use href="#open"/></svg></button>
<button aria-label="Save"><svg><use href="#save"/></svg></button>
<button aria-label="New layout"><svg><use href="#layout"/></svg></button>
<button aria-label="Layout manager"><svg><use href="#layouts"/></svg></button>
<button aria-label="Style manager"><svg><use href="#style"/></svg></button>
</div>
<div class="group">
<button class="on" aria-label="Pan"><svg><use href="#hand"/></svg></button>
<button disabled aria-label="Pan to selection"><svg><use href="#pan"/></svg></button>
<button aria-label="Zoom in"><svg><use href="#zin"/></svg></button>
<button aria-label="Zoom out"><svg><use href="#zout"/></svg></button>
<button aria-label="Zoom full"><svg><use href="#zfull"/></svg></button>
<button disabled aria-label="Zoom to selection"><svg><use href="#zsel"/></svg></button>
<button aria-label="Zoom to layer"><svg><use href="#zlay"/></svg></button>
<button aria-label="Zoom to native resolution"><svg><use href="#znat"/></svg></button>
<button aria-label="Zoom last"><svg><use href="#zlast"/></svg></button>
<button disabled aria-label="Zoom next"><svg><use href="#znext"/></svg></button>
<button aria-label="New map view"><svg><use href="#map"/></svg></button>
<button aria-label="New 3D view"><svg><use href="#map3d"/></svg></button>
<button aria-label="New bookmark"><svg><use href="#bmnew"/></svg></button>
<button aria-label="Show bookmarks"><svg><use href="#bm"/></svg></button>
<button aria-label="Temporal controller"><svg><use href="#clock"/></svg></button>
<button aria-label="Refresh"><svg><use href="#refresh"/></svg></button>
</div>
<div class="group">
<button aria-label="Identify"><svg><use href="#info"/></svg></button>
<button disabled aria-label="Field calculator"><svg><use href="#abacus"/></svg></button>
<button aria-label="Toolbox"><svg><use href="#gear"/></svg></button>
<button aria-label="Statistics"><svg><use href="#sigma"/></svg></button>
<button class="drop" disabled aria-label="Attribute table"><svg><use href="#table"/></svg></button>
<button class="drop" aria-label="Measure"><svg><use href="#ruler"/></svg></button>
<button aria-label="Map tips"><svg><use href="#tip"/></svg></button>
<button class="drop" disabled aria-label="Run action"><svg><use href="#action"/></svg></button>
</div>
</div>

<div class="toolrow">
<div class="group">
<button aria-label="Data source manager"><svg><use href="#dsm"/></svg></button>
<button aria-label="New GeoPackage"><svg><use href="#gpkgnew"/></svg></button>
<button aria-label="New shapefile"><svg><use href="#shpnew"/></svg></button>
<button aria-label="New SpatiaLite"><svg><use href="#splnew"/></svg></button>
<button aria-label="New scratch layer"><svg><use href="#mem"/></svg></button>
<button aria-label="New mesh"><svg><use href="#mesh"/></svg></button>
<span class="sep"></span>
<button aria-label="New virtual layer"><svg><use href="#virt"/></svg></button>
<span class="sep"></span>
</div>
<div class="group">
<button disabled aria-label="Current edits"><svg><use href="#pencils"/></svg></button>
<button disabled aria-label="Toggle editing"><svg><use href="#pencil"/></svg></button>
<button disabled aria-label="Save edits"><svg><use href="#saveed"/></svg></button>
<button disabled aria-label="Add feature"><svg><use href="#addpt"/></svg></button>
<button class="drop" disabled aria-label="Vertex tool"><svg><use href="#vertex"/></svg></button>
<button disabled aria-label="Modify attributes"><svg><use href="#modattr"/></svg></button>
<button disabled aria-label="Delete selected"><svg><use href="#trash"/></svg></button>
<button disabled aria-label="Cut"><svg><use href="#cut"/></svg></button>
<button disabled aria-label="Copy"><svg><use href="#copy"/></svg></button>
<button disabled aria-label="Paste"><svg><use href="#paste"/></svg></button>
<button disabled aria-label="Undo"><svg><use href="#undo"/></svg></button>
<button disabled aria-label="Redo"><svg><use href="#redo"/></svg></button>
</div>
<div class="group">
<button disabled aria-label="Labeling options"><svg><use href="#label"/></svg></button>
<button disabled aria-label="Diagram options"><svg><use href="#diagram"/></svg></button>
<span class="sep"></span>
<button aria-label="Highlight pinned labels"><svg><use href="#labpin"/></svg></button>
<button aria-label="Show unplaced labels"><svg><use href="#labred"/></svg></button>
<span class="sep"></span>
<button disabled aria-label="Pin labels"><svg><use href="#labp"/></svg></button>
<button disabled aria-label="Show or hide labels"><svg><use href="#labeye"/></svg></button>
<button disabled aria-label="Move label"><svg><use href="#labgo"/></svg></button>
<button disabled aria-label="Rotate label"><svg><use href="#labrot"/></svg></button>
<button disabled aria-label="Change label"><svg><use href="#labed"/></svg></button>
</div>
<div class="group">
<button aria-label="Triangle plugin"><svg><use href="#tri"/></svg></button>
<button aria-label="Add web service"><svg><use href="#globeadd"/></svg></button>
<button aria-label="Search web service"><svg><use href="#globefind"/></svg></button>
<button aria-label="MetaSearch"><svg><use href="#binoc"/></svg></button>
</div>
<div class="group">
<button aria-label="Python console"><svg><use href="#python"/></svg></button>
<button aria-label="Layer stack plugin"><svg><use href="#layers3"/></svg></button>
<button aria-label="Leaf plugin"><svg><use href="#leaf"/></svg></button>
<button aria-label="Earth plugin"><svg><use href="#earth"/></svg></button>
</div>
<div class="group"><button aria-label="Help contents"><svg><use href="#help"/></svg></button></div>
<div class="group"><button aria-label="Topology checker"><svg><use href="#topol"/></svg></button></div>
</div>

<div class="toolrow">
<div class="group">
<button disabled aria-label="Advanced digitizing"><svg><use href="#setsq"/></svg></button>
<button class="drop" disabled aria-label="Digitize with curve"><svg><use href="#curve"/></svg></button>
<button class="drop" disabled aria-label="Move feature"><svg><use href="#mvfeat"/></svg></button>
<button disabled aria-label="Rotate feature"><svg><use href="#blobrot"/></svg></button>
<button disabled aria-label="Scale feature"><svg><use href="#blobscale"/></svg></button>
<button disabled aria-label="Simplify"><svg><use href="#simpl"/></svg></button>
<button disabled aria-label="Add ring"><svg><use href="#ring"/></svg></button>
<button disabled aria-label="Add part"><svg><use href="#part"/></svg></button>
<button disabled aria-label="Fill ring"><svg><use href="#fillring"/></svg></button>
<button disabled aria-label="Delete ring"><svg><use href="#delring"/></svg></button>
<button disabled aria-label="Delete part"><svg><use href="#delpart"/></svg></button>
<button disabled aria-label="Reshape"><svg><use href="#reshape"/></svg></button>
<button disabled aria-label="Offset curve"><svg><use href="#offset"/></svg></button>
<button disabled aria-label="Reverse line"><svg><use href="#reverse"/></svg></button>
<button disabled aria-label="Trim or extend"><svg><use href="#trim"/></svg></button>
<button disabled aria-label="Split features"><svg><use href="#split"/></svg></button>
<button disabled aria-label="Split parts"><svg><use href="#split"/></svg></button>
<button disabled aria-label="Merge features"><svg><use href="#merge"/></svg></button>
<button disabled aria-label="Merge attributes"><svg><use href="#align"/></svg></button>
<button class="drop" disabled aria-label="Rotate point symbols"><svg><use href="#rotpt"/></svg></button>
</div>
<div class="group">
<button aria-label="Enable snapping"><svg><use href="#magnet"/></svg></button>
<button disabled aria-label="Snapping layers"><svg><use href="#snapcfg"/></svg></button>
<button class="on dark" disabled aria-label="Snapping type"><svg><use href="#snapdots"/></svg></button>
<div class="spin tol"><input type="text" value="12" disabled aria-label="Snapping tolerance"><span class="steps"><button class="up" disabled aria-label="Increase"></button><button class="down" disabled aria-label="Decrease"></button></span></div>
<select class="unit" disabled aria-label="Snapping unit"><option>px</option></select>
<button aria-label="Topological editing"><svg><use href="#topo"/></svg></button>
<button aria-label="Overlap avoidance"><svg><use href="#overlap"/></svg></button>
<button disabled aria-label="Snap on intersection"><svg><use href="#cross"/></svg></button>
<button class="drop" disabled aria-label="Self snapping"><svg><use href="#selfx"/></svg></button>
<button disabled aria-label="Tracing"><svg><use href="#trace"/></svg></button>
</div>
</div>

<div class="toolrow">
<div class="group">
<button class="drop" disabled aria-label="Circular string"><svg><use href="#arc"/></svg></button>
<button class="drop" disabled aria-label="Circle"><svg><use href="#circ"/></svg></button>
<button class="drop" disabled aria-label="Ellipse"><svg><use href="#ell"/></svg></button>
<button class="drop" disabled aria-label="Rectangle"><svg><use href="#rect"/></svg></button>
<button class="drop" disabled aria-label="Regular polygon"><svg><use href="#poly"/></svg></button>
</div>
<div class="group">
<button class="drop" disabled aria-label="Select features"><svg><use href="#selrect"/></svg></button>
<button class="drop" disabled aria-label="Select by expression"><svg><use href="#selexp"/></svg></button>
<button class="drop" aria-label="Deselect"><svg><use href="#desel"/></svg></button>
<button aria-label="Select by location"><svg><use href="#selloc"/></svg></button>
</div>
<div class="group">
<button disabled aria-label="Edit mesh"><svg><use href="#meshed"/></svg></button>
<button class="drop" disabled aria-label="Select mesh elements"><svg><use href="#meshsel"/></svg></button>
<button disabled aria-label="Transform mesh"><svg><use href="#meshtr"/></svg></button>
<button class="drop" disabled aria-label="Force by lines"><svg><use href="#meshfc"/></svg></button>
</div>
<div class="group">
<button class="drop" aria-label="New annotation layer"><svg><use href="#annlayer"/></svg></button>
<button aria-label="Modify annotations"><svg><use href="#annsel"/></svg></button>
<button aria-label="Polygon annotation"><svg><use href="#annpoly"/></svg></button>
<button aria-label="Line annotation"><svg><use href="#annline"/></svg></button>
<button aria-label="Marker annotation"><svg><use href="#annmark"/></svg></button>
<button aria-label="Text annotation at point"><svg><use href="#anntext"/></svg></button>
<span class="sep"></span>
<button class="drop" aria-label="Text annotation"><svg><use href="#textann"/></svg></button>
</div>
<div class="group">
<button aria-label="Contrast plugin"><svg><use href="#plug1"/></svg></button>
<button aria-label="Plugin settings"><svg><use href="#cog"/></svg></button>
<button aria-label="Add"><svg><use href="#plusbox"/></svg></button>
<button aria-label="Synchronize"><svg><use href="#sync"/></svg></button>
</div>
<div class="group">
<button aria-label="Cloud projects"><svg><use href="#cloud"/></svg></button>
<button aria-label="Synchronize cloud project"><svg><use href="#cloudud"/></svg></button>
<span class="sep"></span>
<button aria-label="Package project"><svg><use href="#boxin"/></svg></button>
<button aria-label="Synchronize from package"><svg><use href="#boxout"/></svg></button>
<span class="sep"></span>
<button aria-label="Tools"><svg><use href="#tools"/></svg></button>
</div>
<div class="group">
<button aria-label="Search layers"><svg><use href="#gsearch"/></svg></button>
<button aria-label="Map painter"><svg><use href="#paint"/></svg></button>
</div>
<div class="group"></div>
</div>

<main class="work">
<aside class="docks">
<section class="dock">
<div class="dockhead"><h2>Browser</h2><button aria-label="Float Browser"><svg><use href="#float"/></svg></button><button aria-label="Close Browser"><svg><use href="#close"/></svg></button></div>
<div class="docktools">
<button aria-label="Add selected layers"><svg><use href="#addlay"/></svg></button><button aria-label="Refresh browser"><svg><use href="#refresh"/></svg></button><button aria-label="Filter browser"><svg><use href="#funnel"/></svg></button><button aria-label="Collapse all"><svg><use href="#collapse"/></svg></button><button aria-label="Properties"><svg><use href="#inforound"/></svg></button>
</div>
<div class="treebox">
<ul class="tree">
<li><i class="tw open"></i><svg><use href="#star"/></svg>Favorites</li>
<li class="child"><i class="tw"></i><svg><use href="#folder"/></svg>C:\Users\Admin\Desktop\QGIS</li>
<li><i class="tw"></i><svg><use href="#bm"/></svg>Spatial Bookmarks</li>
<li><i class="tw"></i><svg><use href="#fproj"/></svg>Project Home</li>
<li><i class="tw"></i><svg><use href="#fhome"/></svg>Home</li>
<li><i class="tw"></i><svg><use href="#folder"/></svg>C:\ (Windows )</li>
<li><i class="tw"></i><svg><use href="#folder"/></svg>E:\ (TOSHIBA EXT)</li>
<li><i class="tw"></i><svg><use href="#folder"/></svg>V:\ (labmgf)</li>
<li><i class="tw none"></i><svg><use href="#gpkg"/></svg>GeoPackage</li>
<li><i class="tw none"></i><svg><use href="#feather"/></svg>SpatiaLite</li>
<li><i class="tw"></i><svg><use href="#pg"/></svg>PostGIS</li>
<li><i class="tw none"></i><svg><use href="#hana"/></svg>SAP HANA</li>
<li><i class="tw none"></i><svg><use href="#mssql"/></svg>MSSQL</li>
<li><i class="tw none"></i><svg><use href="#oracle"/></svg>Oracle</li>
<li><i class="tw none"></i><svg><use href="#globe"/></svg>ArcGIS REST Servers</li>
</ul>
<div class="vbar"><button class="up" aria-label="Scroll up"></button><span class="thumb"></span><span class="track"></span><button class="down" aria-label="Scroll down"></button></div>
<div class="hbar"><button class="left" aria-label="Scroll left"></button><span class="thumb"></span><span class="track"></span><button class="right" aria-label="Scroll right"></button></div>
<div class="corner"></div>
</div>
</section>
<div class="splitter"></div>
<section class="dock grow">
<div class="dockhead"><h2>Layers</h2><button aria-label="Float Layers"><svg><use href="#float"/></svg></button><button aria-label="Close Layers"><svg><use href="#close"/></svg></button></div>
<div class="docktools">
<button aria-label="Layer styling"><svg><use href="#brush"/></svg></button><button aria-label="Add group"><svg><use href="#grp"/></svg></button><button aria-label="Map themes"><svg><use href="#eye"/></svg></button><button aria-label="Filter legend"><svg><use href="#funnelm"/></svg></button><button class="drop" disabled aria-label="Filter by expression"><svg><use href="#epsf"/></svg></button><button aria-label="Expand all"><svg><use href="#expand"/></svg></button><button aria-label="Collapse all layers"><svg><use href="#collapse"/></svg></button><button aria-label="Remove layer"><svg><use href="#remove"/></svg></button>
</div>
<ul class="layers">
<li class="sel"><i class="tw"></i><input type="checkbox" id="l1" checked><svg><use href="#rasterblue"/></svg><label for="l1"><u>2022_dem_20cm</u></label></li>
<li class="hid"><i class="tw"></i><input type="checkbox" id="l2"><svg><use href="#raster"/></svg><label for="l2">2021_dem_20cm</label></li>
<li><i class="tw"></i><input type="checkbox" id="l3" checked><svg><use href="#raster"/></svg><label for="l3">2022_ortofoto_20cm</label></li>
</ul>
</section>
</aside>
<div class="gutter"></div>
<section class="canvas" aria-label="Map canvas">
<svg viewBox="250 200 1430 769" role="img" aria-label="Digital elevation model">
<defs>
<clipPath id="dem"><path d="M874 325L875 322H879L897 327 920 335 942 343 960 349 978 357 995 362 998 362 1001 359 1013 357 1016 354 1025 352 1030 347 1040 342 1046 341 1055 339 1060 338 1062 335 1065 338 1077 336 1078 341 1085 347 1083 350 1086 352 1087 360 1085 367 1083 374 1078 378 1077 384 1080 389 1076 388 1074 392 1068 394 1055 397 1056 401 1063 406 1059 414 1058 428 1065 431 1072 430 1080 433 1095 431 1096 440 1099 448 1097 457 1094 466 1092 474 1087 477 1073 477 1060 482 1047 486 1040 490 1031 490 1030 497 1025 500 1021 522 1017 540 1014 560 1008 580 1007 597 1012 600 1009 604 1006 607 1005 619 1003 622 1002 643 999 653 995 660 992 673 988 690 986 702 983 719H988L990 723H999L993 738 989 748 984 755 983 764 979 766 974 778 970 779 969 800 968 830 965 862 961 880 958 898 953 896 943 893 905 879 855 861 800 840 750 823 701 805Z"/></clipPath>
<linearGradient id="d-left" gradientUnits="userSpaceOnUse" x1="850" y1="330" x2="780" y2="800"><stop offset="0" stop-color="#686868"/><stop offset=".35" stop-color="#828282"/><stop offset=".62" stop-color="#a8a8a8"/><stop offset=".8" stop-color="#c8c8c8"/><stop offset=".95" stop-color="#eaeaea"/><stop offset="1" stop-color="#f4f4f4"/></linearGradient>
<linearGradient id="d-mid" gradientUnits="userSpaceOnUse" x1="1050" y1="360" x2="860" y2="850"><stop offset="0" stop-color="#181818"/><stop offset=".12" stop-color="#303030"/><stop offset=".28" stop-color="#454545"/><stop offset=".5" stop-color="#606060"/><stop offset=".72" stop-color="#717171"/><stop offset=".88" stop-color="#8c8c8c"/><stop offset="1" stop-color="#bbb"/></linearGradient>
<linearGradient id="d-se" gradientUnits="userSpaceOnUse" x1="972" y1="850" x2="850" y2="840"><stop offset="0" stop-color="#9c9c9c"/><stop offset=".45" stop-color="#c9c9c9"/><stop offset="1" stop-color="#f6f6f6"/></linearGradient>
<filter id="f2"><feGaussianBlur stdDeviation="2"/></filter>
<filter id="f5" x="-30%" y="-30%" width="160%" height="160%"><feGaussianBlur stdDeviation="5"/></filter>
<filter id="f12" x="-50%" y="-50%" width="200%" height="200%"><feGaussianBlur stdDeviation="12"/></filter>
</defs>
<g clip-path="url(#dem)">
<path d="M680 300H1120V920H680Z" fill="url(#d-left)"/>
<path d="M912 270H1130V620H860L870 560 890 500 900 430Z" fill="#4d4d4d" filter="url(#f12)"/>
<path d="M985 340L1130 280V900H840L790 800 800 690 822 635 850 590 875 535 905 480 940 430 958 390Z" fill="url(#d-mid)" filter="url(#f5)"/>
<path d="M1020 372L1095 335V375L1070 395 1030 392Z" fill="#050505" opacity=".7" filter="url(#f5)"/>
<path d="M1075 432L1110 425V460L1088 462Z" fill="#000" opacity=".9" filter="url(#f5)"/>
<path d="M1010 445Q1025 410 1055 400V435Z" fill="#444" opacity=".5" filter="url(#f2)"/>
<path d="M985 520L1030 490 1015 590 975 600Z" fill="#4a4a4a" opacity=".6" filter="url(#f12)"/>
<g fill="none" stroke-linecap="round" filter="url(#f2)" opacity=".42">
<path d="M970 415Q975 398 990 382 1020 358 1065 347" stroke="#666" stroke-width="4"/>
<path d="M882 586Q888 535 902 510 915 490 936 475 957 463 957 440" stroke="#8c8c8c" stroke-width="6"/>
<path d="M866 589H880" stroke="#999" stroke-width="6"/>
<path d="M964 650Q970 590 957 560 950 540 962 525L995 498 1012 480 1065 466" stroke="#888" stroke-width="6"/>
<path d="M950 700Q965 665 965 630V575" stroke="#888" stroke-width="6"/>
<path d="M890 605Q892 625 885 640 875 655 848 659 832 662 818 672" stroke="#aaa" stroke-width="6"/>
<path d="M820 645Q850 637 884 633" stroke="#aaa" stroke-width="5"/>
<path d="M1013 448L1060 444" stroke="#555" stroke-width="4"/>
<path d="M905 570Q940 590 936 640 935 670 915 700" stroke="#585858" stroke-width="6"/>
</g>
<path d="M820 660L850 660 870 700 855 740 860 790 840 850 770 800 760 740Z" fill="#b8b8b8" opacity=".9" filter="url(#f12)"/>
<path d="M850 770L880 750 905 790 905 850 840 850Z" fill="#b8b8b8" opacity=".7" filter="url(#f12)"/>
<path d="M799 665L812 650 824 660 824 690 800 712 775 745 765 785 740 795 755 750 780 705Z" fill="#ececec" opacity=".8" filter="url(#f5)"/>
<path d="M750 780L768 784 800 780 822 785 826 815 840 840 880 860 950 905 900 910 760 850 720 815Z" fill="#fdfdfd" filter="url(#f5)"/>
<path d="M780 785L815 770 840 776 836 792 823 806 828 832 850 847 850 865 780 830Z" fill="#f4f4f4" opacity=".75" filter="url(#f2)"/>
<path d="M868 825L885 800 898 792 905 810 910 845 865 845Z" fill="#e0e0e0" opacity=".7" filter="url(#f5)"/>
<path d="M912 842L990 760V930H900L850 850 905 847Z" fill="url(#d-se)"/>
<path d="M850 848Q862 832 884 832 900 832 908 847Z" fill="#f8f8f8" filter="url(#f2)"/>
<path d="M930 745L950 720 985 718 1005 722 990 760 972 778 915 836 905 800Z" fill="#848484" opacity=".7" filter="url(#f2)"/>
<circle cx="962" cy="707" r="11" fill="#9c9c9c" opacity=".7" filter="url(#f5)"/>
<path d="M936 750Q948 732 951 715" stroke="#a4a4a4" stroke-width="6" fill="none" opacity=".8" filter="url(#f5)"/>
</g>
</svg>
</section>
</main>

<footer class="status">
<div class="locator"><svg><use href="#search"/></svg><input type="text" placeholder="Type to locate (Ctrl+K)" aria-label="Type to locate"></div>
<label for="coord">Coordinate</label><input class="box coord" id="coord" type="text" value="415355,5086714">
<button class="ico" aria-label="Toggle extents"><svg><use href="#mouse"/></svg></button>
<label for="scale">Scale</label><select class="scale" id="scale"><option>1:28590</option></select>
<button class="ico lock" aria-label="Lock scale"><svg><use href="#lock"/></svg></button>
<label for="mag">Magnifier</label><div class="spin mag"><input id="mag" type="text" value="100%"><span class="steps"><button class="up" aria-label="Increase magnifier"></button><button class="down" aria-label="Decrease magnifier"></button></span></div>
<label for="rot">Rotation</label><div class="spin rot"><input id="rot" type="text" value="0.0 °"><span class="steps"><button class="up" aria-label="Increase rotation"></button><button class="down" aria-label="Decrease rotation"></button></span></div>
<span class="render"><input type="checkbox" id="render" checked><label for="render">Render</label></span>
<button class="crs"><svg><use href="#crs"/></svg>EPSG:32632</button>
<button class="ico last" aria-label="Messages"><svg><use href="#bubble"/></svg></button>
</footer>
</div>
</body>
</html>
```

FILE: styles.css
```css
* { box-sizing: border-box; }
body {
  margin: 0;
  font: 11px/16px "Open Sans", "Noto Sans", sans-serif;
  color: #000;
  background: #efefef;
}
button { padding: 0; border: 0; background: none; font: inherit; color: inherit; }
h1, h2 { margin: 0; font-size: 11px; font-weight: 400; }
ul { list-style: none; margin: 0; padding: 0; }
.paints { position: absolute; width: 0; height: 0; }
.sprite { display: none; }

/* lettering used inside icons */
.t-abc { font: bold 9px "Liberation Sans", sans-serif; fill: #333; }
.t-red { fill: #e00000; }
.t-a { font: 14px "Open Sans", sans-serif; fill: #333; }
.t-11 { font: bold 9px "Liberation Sans", sans-serif; fill: #222; }
.t-i { font: italic bold 15px "Liberation Serif", serif; fill: #fff; }
.t-q { font: 16px "Liberation Serif", serif; fill: #fff; }
.t-eps { font: 20px "Liberation Serif", serif; fill: #666; }
.t-A { font: bold 18px "Liberation Sans", sans-serif; fill: #4a7ab8; stroke: #2b4a6b; }
.t-T { font: bold 15px "Liberation Serif", serif; fill: #333; }

.window {
  display: flex;
  flex-direction: column;
  height: 100vh;
  border-left: 1px solid #1b1b1b;
  border-bottom: 1px solid #444;
}

.titlebar { display: flex; align-items: center; height: 23px; padding-left: 2px; background: #f3f3f3; color: #848484; }
.logo { width: 16px; height: 16px; }
.titlebar h1 { flex: 1; padding-left: 7px; }
.winbtns { display: flex; margin-right: 2px; }
.winbtns button { width: 46px; height: 23px; }
.winbtns svg { width: 12px; height: 12px; fill: none; stroke: #777; }

.menubar { display: flex; gap: 16px; height: 20px; padding-left: 11px; border-bottom: 1px solid #d4d4d4; align-items: center; }
.menubar a { color: #969696; text-decoration: none; }

.toolrow {
  display: flex;
  gap: 4px;
  flex: 0 0 39px;
  background: linear-gradient(#fafafa, #eee);
  border-bottom: 1px solid #b3b3b3;
}
.group { display: flex; align-items: center; }
.group::before {
  content: "";
  width: 5px;
  height: 17px;
  margin: 0 3px 0 4px;
  background: radial-gradient(circle at 1px 1px, #b4b4b4 1px, transparent 1px) 0 0 / 3px 3px;
  opacity: .6;
}
.group > button { width: 33px; height: 32px; display: flex; align-items: center; justify-content: center; }
.group svg { width: 24px; height: 24px; }
.group > .drop { width: 45px; justify-content: flex-start; gap: 6px; padding-left: 5px; }
.drop::after { content: ""; border: 4px solid transparent; border-top-color: #555; border-bottom: 0; }
button:disabled > svg { filter: grayscale(.7); opacity: .4; }
.drop:disabled::after { border-top-color: #999; }
.group > .on { width: 32px; margin-left: 1px; border: 1px solid #a6a6a6; border-radius: 3px; background: #dadada; }
.group > .dark { background: #d2d2d2; }
.group > .dark svg { opacity: .6; }
.sep { width: 4px; height: 19px; margin-left: 3px; border-left: 1px solid #c8c8c8; }

.spin { display: flex; height: 25px; border: 1px solid #b0b0b0; border-radius: 3px; background: #fff; overflow: hidden; }
.spin input { flex: 1; min-width: 0; border: 0; padding: 0 4px; background: none; font: inherit; color: inherit; }
.steps { display: flex; flex-direction: column; justify-content: center; gap: 5px; width: 14px; border-left: 1px solid #c4c4c4; align-items: center; background: #f8f8f8; }
.up, .down { border: 4px solid transparent; width: 0; height: 0; }
.up { border-top: 0; border-bottom-color: #555; }
.down { border-bottom: 0; border-top-color: #555; }
.up:disabled { border-bottom-color: #999; }
.down:disabled { border-top-color: #999; }
.tol { width: 72px; margin-left: 1px; background: #efefef; color: #888; }
select {
  appearance: none;
  height: 25px;
  border: 1px solid #b0b0b0;
  border-radius: 3px;
  padding: 0 4px;
  font: inherit;
  color: #000;
}
.unit {
  width: 87px;
  height: 23px;
  margin: 0 0 0 1px;
  color: #888;
  opacity: 1;
  background: conic-gradient(from 315deg at 50% 100%, #0000 0 0) no-repeat, linear-gradient(#fdfdfd, #f3f3f3);
}
.unit, .scale { --tip: linear-gradient(to top right, #0000 50%, #777 50%) right 11px center / 4px 4px no-repeat, linear-gradient(to top left, #0000 50%, #777 50%) right 7px center / 4px 4px no-repeat; }
.unit { background: var(--tip), linear-gradient(#fdfdfd, #f3f3f3); }

.work { display: flex; flex: 1; min-height: 0; }
.docks { display: flex; flex-direction: column; width: 241px; }
.dock { display: flex; flex-direction: column; }
.grow { flex: 1; }
.dockhead { display: flex; align-items: center; gap: 3px; height: 20px; padding: 0 2px 0 4px; }
.dockhead h2 { flex: 1; }
.dockhead button, .dockhead svg { width: 11px; height: 11px; display: block; }
.docktools { display: flex; align-items: center; gap: 9px; height: 30px; padding: 0 0 2px 8px; }
.docktools svg { width: 16px; height: 16px; display: block; }
.docktools .drop { display: flex; align-items: center; gap: 4px; }
.treebox {
  display: grid;
  grid-template: 316px 14px / 1fr 14px;
  border: 1px solid #b3b3b3;
  background: #fff;
}
.tree { overflow: hidden; min-width: 0; }
.tree li { display: flex; align-items: center; height: 22px; white-space: nowrap; padding-left: 4px; gap: 6px; }
.tree svg { flex: none; width: 20px; height: 20px; }
.tree .child { padding-left: 21px; }
.tw { flex: none; width: 10px; height: 8px; }
.tw::before { content: ""; display: block; width: 0; margin: 0 2px; border: 4px solid transparent; border-left: 5px solid #555; border-right: 0; }
.tw.open::before { margin: 2px 0; border: 4px solid transparent; border-top: 5px solid #555; border-bottom: 0; }
.tw.none { visibility: hidden; }
.vbar, .hbar { display: flex; background: #e2e2e2; }
.vbar { flex-direction: column; border-left: 1px solid #b3b3b3; align-items: center; }
.hbar { border-top: 1px solid #b3b3b3; align-items: center; }
.vbar button, .hbar button { width: 13px; height: 13px; border: 0; display: grid; place-items: center; background: #fafafa; }
.vbar button::before, .hbar button::before { content: ""; border: 4px solid transparent; }
.vbar .up::before { border-top: 0; border-bottom-color: #444; }
.vbar .down::before { border-bottom: 0; border-top-color: #444; }
.hbar .left::before { border-left: 0; border-right-color: #444; }
.hbar .right::before { border-right: 0; border-left-color: #444; }
.vbar .thumb { width: 13px; flex: 176; background: linear-gradient(90deg, #fcfcfc, #f0f0f0); border: solid #b3b3b3; border-width: 1px 0; }
.vbar .track { flex: 114; }
.hbar .thumb { flex: 188; height: 13px; background: linear-gradient(#fcfcfc, #f0f0f0); border: solid #b3b3b3; border-width: 0 1px; }
.hbar .track { flex: 9; }
.corner { background: #efefef; border: solid #b3b3b3; border-width: 1px 0 0 1px; }
.splitter { height: 7px; display: grid; place-items: center; }
.splitter::before { content: ""; width: 17px; height: 2px; border-top: 1px dotted #aaa; }

.layers { flex: 1; border: 1px solid #b3b3b3; background: #fff; padding-top: 1px; font-size: 12px; }
.layers li { display: flex; align-items: center; height: 22px; padding-left: 8px; font-weight: 700; }
.layers .sel { background: #efefef; }
.layers .hid { color: #808080; font-style: italic; }
.layers svg { width: 17px; height: 17px; margin: 0 7px 0 8px; }
.layers .tw { margin-right: 10px; }
input[type="checkbox"] { appearance: none; width: 14px; height: 14px; margin: 0; border: 1px solid #b0b0b0; background: #fff; display: grid; place-items: center; }
input[type="checkbox"]:checked::before { content: ""; width: 9px; height: 9px; background: #000; clip-path: polygon(0 45%, 22% 40%, 38% 68%, 80% 0, 100% 5%, 48% 100%, 30% 100%); }

.gutter { width: 7px; background: radial-gradient(circle at 1px 1px, #999 1px, transparent 1px) 4px 385px / 3px 3px no-repeat; }
.canvas { flex: 1; min-width: 0; border: 1px solid #b3b3b3; background: #fff; }
.canvas svg { display: block; width: 100%; height: 100%; }

.status { display: flex; align-items: center; gap: 4px; flex: 0 0 31px; padding: 0 6px 0 4px; font-family: Roboto, "Noto Sans", sans-serif; }
.locator { display: flex; align-items: center; gap: 8px; width: 232px; height: 26px; margin-right: auto; padding-left: 10px; border: 1px solid #a8a8a8; border-radius: 3px; background: #fff; font-family: "Noto Sans", sans-serif; }
.locator svg { width: 15px; height: 15px; }
.locator input { flex: 1; min-width: 0; border: 0; padding: 0; font: inherit; background: none; }
.locator input::placeholder { color: #7c7c7c; opacity: 1; }
.box { height: 25px; border: 1px solid #b0b0b0; border-radius: 3px; padding: 0 6px; font: inherit; background: #fff; }
.coord { width: 97px; }
.ico svg { display: block; width: 20px; height: 20px; }
.status .ico { margin: 0 8px 0 0; }
.status .lock { margin: 0 2px 0 6px; }
.status .last { margin: 0 0 0 20px; }
.scale { width: 93px; background: var(--tip), linear-gradient(#c4c4c4, #c4c4c4) right 19px center / 1px 100% no-repeat, #fff; }
.mag { width: 93px; margin-right: 4px; }
.rot { width: 88px; margin-left: 4px; }
.render { display: flex; align-items: center; gap: 4px; margin: 0 10px 0 3px; }
.crs { display: flex; align-items: center; gap: 1px; }
.crs svg { width: 20px; height: 20px; }
```
